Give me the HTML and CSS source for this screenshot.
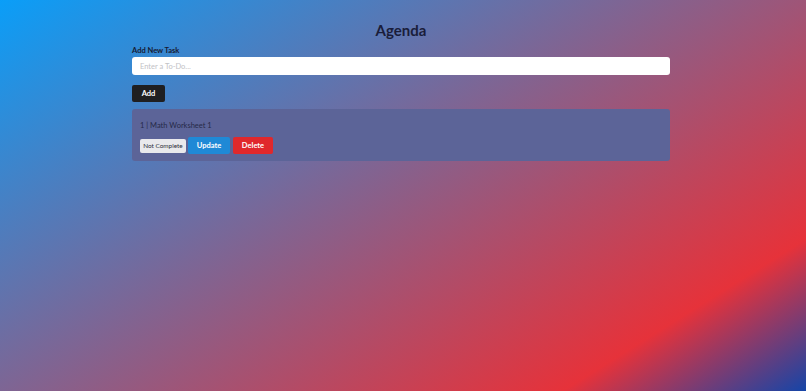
FILE: index.html
```html
<!DOCTYPE html>
<html>
<head>
<meta charset="utf-8">
<link rel="stylesheet" href="styles.css">
</head>
<body>
<main class="app">
  <h1 class="title">Agenda</h1>
  <label class="label" for="task">Add New Task</label>
  <input class="input" id="task" type="text" placeholder="Enter a To-Do...">
  <button class="btn btn-add">Add</button>
  <section class="card">
    <p class="task-text">1 | Math Worksheet 1</p>
    <div class="actions">
      <button class="btn btn-status">Not Complete</button>
      <button class="btn btn-update">Update</button>
      <button class="btn btn-delete">Delete</button>
    </div>
  </section>
</main>
</body>
</html>
```
FILE: styles.css
```css
html, body {
  margin: 0;
  height: 100%;
}
body {
  background: linear-gradient(148deg, #0a9ef8 0%, #e6323a 83%, #1545a8 100%);
  font-family: Lato, "Open Sans", sans-serif;
  color: #1b1f3b;
}
.app {
  width: 538px;
  margin-left: 132px;
  display: flex;
  flex-direction: column;
  align-items: flex-start;
}
.title {
  align-self: stretch;
  text-align: center;
  margin: 0;
  padding-top: 20px;
  font-size: 15px;
  line-height: 20px;
  font-weight: 700;
  color: #1a1d3a;
}
.label {
  margin-top: 6px;
  font-size: 7.5px;
  line-height: 10px;
  font-weight: 700;
  color: #161a33;
}
.input {
  align-self: stretch;
  box-sizing: border-box;
  margin-top: 1px;
  height: 18px;
  border: none;
  border-radius: 3px;
  padding: 0 8px;
  font-family: Lato, sans-serif;
  font-size: 7.5px;
  background: #fff;
}
.input::placeholder {
  color: #c2c2c6;
}
.btn {
  font-family: Lato, sans-serif;
  font-weight: 700;
  border: none;
  border-radius: 2px;
  padding: 0;
  color: #fff;
  cursor: pointer;
}
.btn-add {
  margin-top: 10px;
  width: 33px;
  height: 17px;
  background: #1f1f21;
  font-size: 7.5px;
}
.card {
  align-self: stretch;
  box-sizing: border-box;
  margin-top: 7px;
  height: 52px;
  background: #5c6498;
  border-radius: 3px;
  padding: 12px 8px 0;
}
.task-text {
  margin: 0;
  font-size: 7.5px;
  line-height: 10px;
  color: #262a48;
}
.actions {
  margin-top: 6px;
  display: flex;
  align-items: center;
  gap: 2px;
}
.btn-status {
  width: 46px;
  height: 14px;
  background: #e9e9ec;
  color: #2d2f3a;
  font-weight: 400;
  font-size: 6.4px;
  border-radius: 2px;
}
.btn-update {
  width: 42px;
  height: 17px;
  background: #1f89d6;
  font-size: 7.5px;
}
.btn-delete {
  margin-left: 1px;
  width: 40px;
  height: 17px;
  background: #e0282c;
  font-size: 7.5px;
}
```
